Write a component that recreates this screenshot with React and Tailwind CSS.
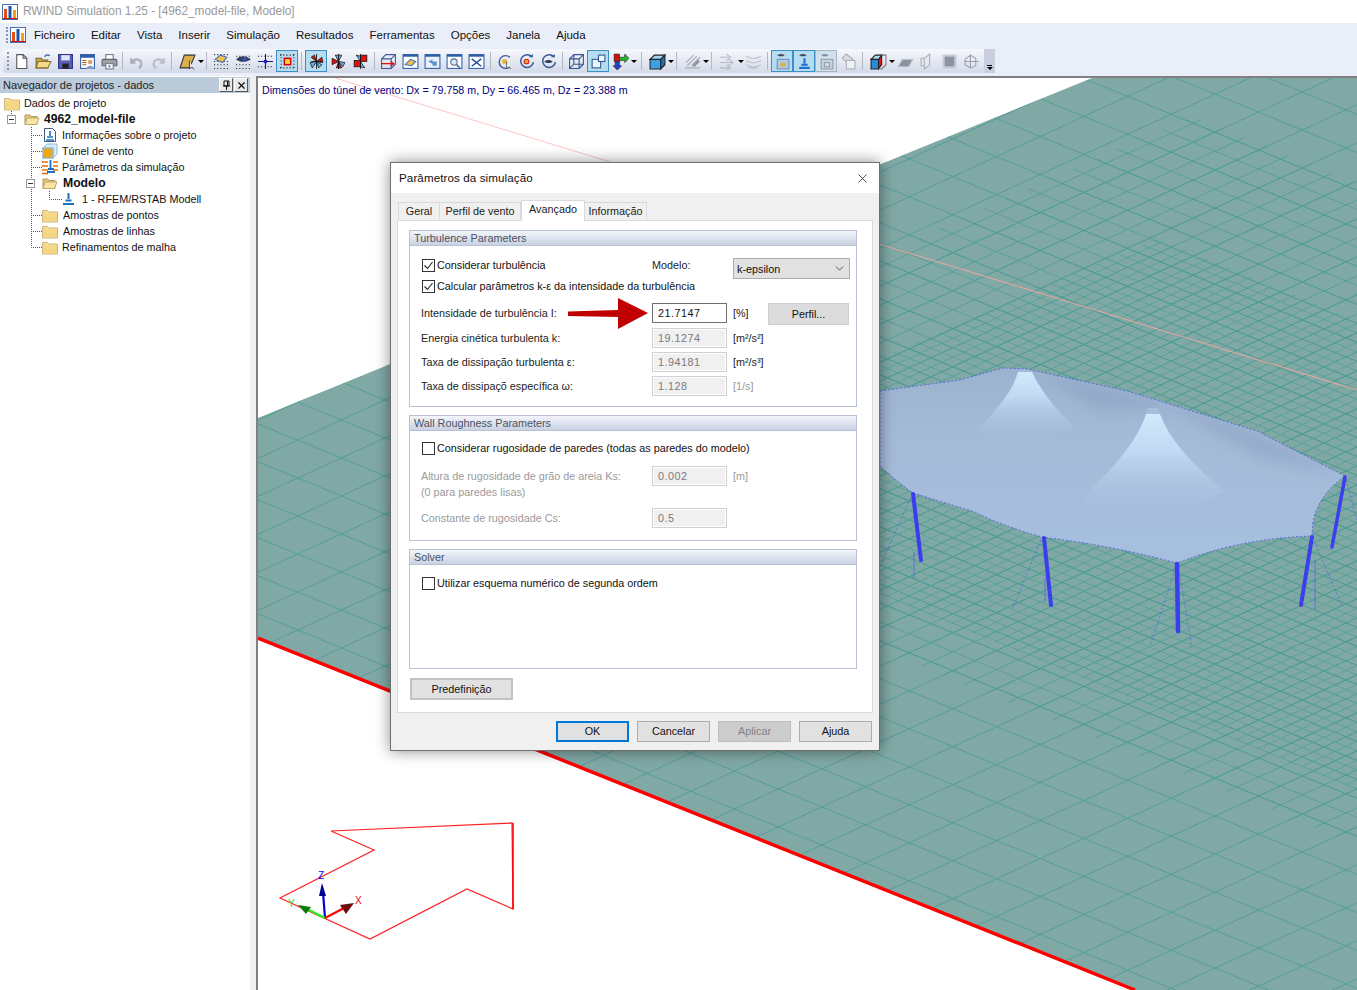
import React from 'react';
import { X, ChevronDown } from 'lucide-react';

const ui = '"Liberation Sans", Arial, sans-serif';

function linesA(step) {
  let d = '';
  for (let c = 197; c < 1620; c += step) d += `M258 ${(c - 0.46 * 258).toFixed(1)}L1357 ${(c - 0.46 * 1357).toFixed(1)}`;
  return d;
}
function linesB(step) {
  let d = '';
  for (let c = -480; c < 890; c += step) d += `M258 ${(c + 0.41 * 258).toFixed(1)}L1357 ${(c + 0.41 * 1357).toFixed(1)}`;
  return d;
}

const roofPath =
  'M880 391 L960 380 L1003 368 L1027 369 L1127 391 L1257 431 L1345 476 Q1318 495 1313 522 L1312 536 Q1240 538 1177 563 Q1110 545 1042 537 Q1000 525 975 512 L913 493 Q895 480 880 466 Z';

function Scene() {
  return (
    <svg width="1099" height="912" viewBox="258 78 1099 912" className="absolute left-0 top-0">
      <defs>
        <clipPath id="ground"><polygon points="258,418 1092,78 1357,78 1357,990 1135,990 258,638" /></clipPath>
        <clipPath id="mid"><polygon points="1192,116 1700,324 1357,845 420,460" /></clipPath>
        <clipPath id="fine"><polygon points="1157,238 1500,380 1357,790 600,480" /></clipPath>
        <clipPath id="roofClip"><path d={roofPath} /></clipPath>
        <linearGradient id="roof" x1="0" y1="0" x2="0" y2="1">
          <stop offset="0" stopColor="#9cb3d0" />
          <stop offset="0.35" stopColor="#a4bbd8" />
          <stop offset="1" stopColor="#a7c0df" />
        </linearGradient>
        <linearGradient id="cone" x1="0" y1="0" x2="0" y2="1">
          <stop offset="0" stopColor="#d2e8fc" />
          <stop offset="0.35" stopColor="#c2daf3" />
          <stop offset="1" stopColor="#a7c0df" stopOpacity="0" />
        </linearGradient>
        <filter id="soft"><feGaussianBlur stdDeviation="7" /></filter>
      </defs>
      <line x1="335" y1="78" x2="640" y2="171" stroke="#ffc4c4" strokeWidth="1" />
      <polygon points="258,418 1092,78 1357,78 1357,990 1135,990 258,638" fill="#80a9a6" />
      <g clipPath="url(#ground)" fill="none" stroke="#4f9d93" strokeWidth="0.9">
        <path d={linesA(38)} />
        <path d={linesB(38)} />
        <g clipPath="url(#mid)" strokeWidth="0.8">
          <path d={linesA(19)} />
          <path d={linesB(19)} />
        </g>
        <g clipPath="url(#fine)" strokeWidth="0.7">
          <path d={linesA(9.5)} />
          <path d={linesB(9.5)} />
        </g>
      </g>
      <line x1="640" y1="171" x2="1357" y2="390" stroke="#eda6a0" strokeWidth="1" />
      <line x1="258" y1="638" x2="1135" y2="990" stroke="#ff0000" strokeWidth="3.5" />

      {/* roof */}
      <path d={roofPath} fill="url(#roof)" />
      <g clipPath="url(#roofClip)">
        <path d="M1040 374 L1127 391 L1257 431 L1345 476 L1260 458 L1170 408 L1100 412 Z" fill="#8aa2c1" opacity="0.6" filter="url(#soft)" />
        <path d="M1018 372 Q1012 396 975 432 Q1025 450 1075 428 Q1044 398 1032 372 Z" fill="url(#cone)" />
        <polygon points="1018,372 1022,368 1030,368 1032,372" fill="#a4bcd8" />
        <path d="M1146 414 Q1136 448 1080 500 Q1155 535 1225 492 Q1172 448 1160 414 Z" fill="url(#cone)" />
        <polygon points="1146,414 1148,408 1158,408 1160,414" fill="#a8bfdb" />
      </g>
      <path d={roofPath} fill="none" stroke="#4a4af0" strokeWidth="0.7" strokeDasharray="2 2" />

      {/* poles */}
      <g stroke="#3d3df0" strokeLinecap="round">
        <line x1="913" y1="494" x2="921" y2="560" strokeWidth="4" />
        <line x1="1044" y1="538" x2="1051" y2="605" strokeWidth="4" />
        <line x1="1177" y1="564" x2="1178" y2="631" strokeWidth="4.5" />
        <line x1="1312" y1="537" x2="1301" y2="605" strokeWidth="4" />
        <line x1="1345" y1="477" x2="1332" y2="547" strokeWidth="3.5" />
      </g>
      <g stroke="#5a5ae8" strokeWidth="0.7" strokeDasharray="2 2" fill="none">
        <path d="M912 495L882 562M1041 540L1012 610M1175 570L1150 646M1180 575L1192 648M1316 545L1342 606M1346 480L1357 520" />
        <path d="M914 552V578M1045 578V602M1315 560V610" strokeDasharray="none" />
      </g>

      {/* wind tunnel outline and axes */}
      <polygon points="331,831 512,823 513,909 467,889 370,939 280,898 374,850" fill="none" stroke="#ff2020" strokeWidth="1.2" />
      <line x1="513" y1="823" x2="513" y2="909" stroke="#ff0000" strokeWidth="1.5" />
      <line x1="325" y1="918" x2="323" y2="892" stroke="#0000dd" strokeWidth="2.2" />
      <polygon points="322,883 326,896 319,896" fill="#000090" />
      <line x1="325" y1="918" x2="305" y2="908" stroke="#22ee22" strokeWidth="2.2" />
      <polygon points="298,905 311,907 306,914" fill="#0b7a0b" />
      <line x1="325" y1="918" x2="344" y2="908" stroke="#ff0000" strokeWidth="2.2" />
      <polygon points="354,903 346,914 340,905" fill="#6d0f0f" />
      <text x="318" y="879" fontSize="10" fill="#0000ff" fontFamily={ui}>Z</text>
      <text x="288" y="907" fontSize="10" fill="#22dd22" fontFamily={ui}>Y</text>
      <text x="355" y="904" fontSize="10" fill="#ee0000" fontFamily={ui}>X</text>
    </svg>
  );
}

/* toolbar drawings, all on a 16 box */
const icons = {
  doc: <path d="M3.5 1.5h6l3.5 3.5v9.5h-9.5z M9.5 1.5v3.5h3.5" fill="#fff" stroke="#555" />,
  open: (
    <>
      <path d="M1 5h5l1 1.5h5v7.5h-11z" fill="#c9a94d" stroke="#7a6425" />
      <path d="M3 8h12l-3 6h-11z" fill="#f3d98a" stroke="#8a7030" />
      <path d="M9 3.5c1.5-2 3-2 5-1" fill="none" stroke="#3b6fb3" strokeWidth="1.3" />
    </>
  ),
  save: (
    <>
      <rect x="1.5" y="1.5" width="13" height="13" fill="#5a5fb8" stroke="#2b2f80" />
      <rect x="4" y="2" width="8" height="5" fill="#dfe6f5" />
      <rect x="5" y="10" width="6" height="4.5" fill="#222" />
    </>
  ),
  props: (
    <>
      <rect x="1.5" y="1.5" width="13" height="13" fill="#fff" stroke="#2d5fa8" />
      <rect x="1.5" y="1.5" width="13" height="3" fill="#2d5fa8" />
      <path d="M3 7h4M3 9h4M3 11h4" stroke="#b06020" />
      <circle cx="10.5" cy="8.5" r="2.2" fill="#e0a070" />
      <path d="M7 15c0-4 7-4 7 0z" fill="#7f9fc8" />
    </>
  ),
  print: (
    <>
      <rect x="4.5" y="1.5" width="7" height="5" fill="#fff" stroke="#777" />
      <rect x="1" y="6" width="14" height="6" rx="1" fill="#9a9fa8" stroke="#60646c" />
      <rect x="4.5" y="10" width="7" height="5" fill="#fff" stroke="#777" />
      <rect x="7" y="11.5" width="2" height="2" fill="#4a8ad0" />
    </>
  ),
  undo: <path d="M3 5l0 4 4 0M3.5 8.5c3-4 9-3 9 2 0 1.5-1 3-2.5 3.5" fill="none" stroke="#a9aeb8" strokeWidth="2" />,
  redo: <path d="M13 5l0 4-4 0M12.5 8.5c-3-4-9-3-9 2 0 1.5 1 3 2.5 3.5" fill="none" stroke="#b9bec8" strokeWidth="2" />,
  wedge: (
    <>
      <path d="M5 2h10l-5 12h-9z" fill="#d9b04d" stroke="#333" />
      <path d="M10 7l0 8 2-2 2 2.5" fill="#fff" stroke="#222" strokeWidth="0.8" />
    </>
  ),
  dotsA: (
    <>
      <path d="M1 1.5h14M1 8h14M1 11h14M1 14.5h14" stroke="#222" strokeDasharray="1 2" />
      <path d="M2 6l5-4 6 2-4 5z" fill="#f0c040" stroke="#4070c0" />
    </>
  ),
  dotsB: (
    <>
      <path d="M1 3h14M1 11h14M1 14.5h14" stroke="#222" strokeDasharray="1 2" />
      <path d="M1 6c4-4 9-4 14 0-5 3-10 3-14 0z" fill="#33405c" />
      <circle cx="9" cy="6" r="2" fill="#3050c0" />
    </>
  ),
  cross: (
    <>
      <path d="M1 8h14M8 1v14" stroke="#1a1a70" />
      <path d="M1 3h14M1 13h14" stroke="#222" strokeDasharray="1 2" />
      <rect x="6.5" y="6.5" width="3" height="3" fill="#2020d0" />
    </>
  ),
  target: (
    <>
      <path d="M1 2h14M1 14h14M2 1v14M14 1v14" stroke="#222" strokeDasharray="1 2" />
      <rect x="5" y="5" width="6" height="6" fill="#ffd040" stroke="#e00000" strokeWidth="1.4" />
    </>
  ),
  fan: (
    <>
      <path d="M8 8l-5-4 3-2zM8 8l5-4 1 5z" fill="#e01010" stroke="#111" strokeWidth="0.7" />
      <path d="M8 8l-6 1 2 5zM8 8l2 6 3-3z" fill="#6ab0e8" stroke="#111" strokeWidth="0.7" />
      <path d="M8 1v14M3 8h10" stroke="#111" strokeWidth="0.8" />
    </>
  ),
  fan2: (
    <>
      <path d="M8 8l-3-6 6 0z M8 8l6 1-2 4z" fill="#6ab0e8" stroke="#111" strokeWidth="0.7" />
      <path d="M8 8l-6-3 0 6zM8 8l-2 6 5 0z" fill="#e01010" stroke="#111" strokeWidth="0.7" />
      <path d="M8 1v14" stroke="#111" strokeWidth="0.8" />
    </>
  ),
  fan3: (
    <>
      <rect x="8" y="2" width="6" height="6" fill="#e01010" stroke="#111" strokeWidth="0.7" />
      <rect x="2" y="7" width="6" height="6" fill="#e01010" stroke="#111" strokeWidth="0.7" />
      <path d="M8 8l-4-6 4 1zM8 8l4 6-4-1z" fill="#6ab0e8" stroke="#111" strokeWidth="0.7" />
      <path d="M8 1v14" stroke="#111" strokeWidth="0.8" />
    </>
  ),
  box: (
    <>
      <path d="M1.5 5.5h9v9h-9zM1.5 5.5l4-4h9v9l-4 4M10.5 5.5l4-4" fill="none" stroke="#3a5a9a" />
      <path d="M1 10h11M10 8l3 2-3 2" fill="none" stroke="#e01010" strokeWidth="1.2" />
    </>
  ),
  win1: (
    <>
      <rect x="1" y="1.5" width="14" height="13" fill="#fff" stroke="#2d5fa8" />
      <rect x="1" y="1.5" width="14" height="2" fill="#2d5fa8" />
      <path d="M3 11l5-5 5 2-4 4z" fill="#f0c040" stroke="#4070c0" />
    </>
  ),
  win2: (
    <>
      <rect x="1" y="1.5" width="14" height="13" fill="#e8f0fa" stroke="#2d5fa8" />
      <rect x="1" y="1.5" width="14" height="2" fill="#2d5fa8" />
      <path d="M4 8l4-2v2h4v4h-4v-2z" fill="#5a8fd0" />
    </>
  ),
  win3: (
    <>
      <rect x="1" y="1.5" width="14" height="13" fill="#fff" stroke="#2d5fa8" />
      <rect x="1" y="1.5" width="14" height="2" fill="#2d5fa8" />
      <circle cx="7.5" cy="8.5" r="3" fill="#d8e8f8" stroke="#5a7090" />
      <path d="M10 11l3 3" stroke="#5a7090" strokeWidth="1.5" />
    </>
  ),
  win4: (
    <>
      <rect x="1" y="1.5" width="14" height="13" fill="#fff" stroke="#2d5fa8" />
      <rect x="1" y="1.5" width="14" height="2" fill="#2d5fa8" />
      <path d="M3.5 5.5l9 7M12.5 5.5l-9 7" stroke="#2050a0" strokeWidth="1.4" />
    </>
  ),
  rot1: (
    <>
      <path d="M13 4a6 6 0 1 0 0 9" fill="none" stroke="#3a5a9a" strokeWidth="1.3" />
      <rect x="6" y="6" width="4" height="4" fill="#f0b020" />
      <path d="M10 8l0 7 2-2 2 2" fill="#fff" stroke="#333" strokeWidth="0.7" />
    </>
  ),
  rot2: (
    <>
      <path d="M13 3.5a6 6 0 1 0 1.5 5" fill="none" stroke="#3a5a9a" strokeWidth="1.4" />
      <path d="M10 4h4V1z" fill="#3a5a9a" />
      <circle cx="8" cy="8" r="2.2" fill="#f0b020" stroke="#d02020" />
    </>
  ),
  rot3: (
    <>
      <path d="M13 3.5a6 6 0 1 0 1.5 5" fill="none" stroke="#3a5a9a" strokeWidth="1.4" />
      <path d="M10 4h4V1z" fill="#3a5a9a" />
      <path d="M4 8c2-2 6-2 8 0-2 2-6 2-8 0z" fill="#33405c" />
    </>
  ),
  cube: <path d="M1.5 5.5h9v9h-9zM1.5 5.5l4-4h9v9l-4 4M10.5 5.5l4-4M1.5 14.5l4-4h9M5.5 1.5v9" fill="none" stroke="#34558f" />,
  twoBox: (
    <>
      <rect x="2" y="6" width="8" height="8" fill="#eaf5fc" stroke="#34558f" />
      <rect x="8" y="2" width="6" height="6" fill="#eaf5fc" stroke="#34558f" />
    </>
  ),
  axes: (
    <>
      <path d="M7 8V1h-5v7z" fill="#d01010" stroke="#222" strokeWidth="0.6" />
      <path d="M7 4h5V1l4 4-4 4V7H7z" fill="#20c020" stroke="#222" strokeWidth="0.6" />
      <path d="M3 8v4H1l4 4 4-4H7V8z" fill="#2040d0" stroke="#222" strokeWidth="0.6" />
    </>
  ),
  solid: (
    <>
      <path d="M1 6h10v9h-10z" fill="#3aa0e8" stroke="#222" />
      <path d="M1 6l4-4h10l-4 4z" fill="#9ed4f5" stroke="#222" />
      <path d="M11 6l4-4v9l-4 4z" fill="#1c70b8" stroke="#222" />
    </>
  ),
  hatch: (
    <>
      <path d="M1 14h14M2 9l7-7M3 12l9-9M7 12l8-8" stroke="#a9aeb8" fill="none" />
      <path d="M8 12l5-6 2 2-5 5z" fill="#8c929c" />
    </>
  ),
  flow: <path d="M1 4h8M1 9h11M1 14h8M7 1l4 3-4 3M9 6l4 3-4 3M7 11l4 3-4 2" fill="none" stroke="#b4b9c2" />,
  waves: <path d="M1 3c5 3 9 3 14 0M1 7c5 3 9 3 14 0M1 11c5 3 9 3 14 0M4 14h8" fill="none" stroke="#bcc1ca" />,
  camA: (
    <>
      <path d="M3 2c2-1.5 5-1.5 7 0-2 1.5-5 1.5-7 0z" fill="#444c60" />
      <rect x="3" y="6" width="11" height="9" fill="#9fd0ef" stroke="#88a" />
      <rect x="6" y="9" width="5" height="4" fill="#e8b040" />
    </>
  ),
  camB: (
    <>
      <path d="M3 2c2-1.5 5-1.5 7 0-2 1.5-5 1.5-7 0z" fill="#444c60" />
      <path d="M3 14h10M5 11h6" stroke="#2070d0" strokeWidth="2" />
      <path d="M8 5v5" stroke="#2070d0" strokeWidth="2" />
    </>
  ),
  camC: (
    <>
      <path d="M3 2c2-1.5 5-1.5 7 0-2 1.5-5 1.5-7 0z" fill="#8a909c" />
      <rect x="3" y="6" width="11" height="9" fill="#c6d6e0" stroke="#99a" />
      <rect x="6" y="9" width="5" height="4" fill="#d2dce4" stroke="#99a" />
    </>
  ),
  camD: (
    <>
      <path d="M2 5l4-4 6 5-4 4z" fill="#d8dce4" stroke="#a9aeb8" />
      <rect x="6" y="7" width="8" height="8" fill="#f0f2f6" stroke="#a9aeb8" />
    </>
  ),
  colorBox: (
    <>
      <path d="M1 6h7v9h-7z" fill="#2b8ad8" stroke="#222" />
      <path d="M8 6l3-4v9l-3 4z" fill="#e01818" stroke="#222" />
      <path d="M1 6l4-4h6l-3 4z" fill="#a9d8f0" stroke="#222" />
      <path d="M11 2h4v9l-4 4H8" fill="none" stroke="#777" />
    </>
  ),
  plane1: <path d="M1 13l4-7h10l-4 7z" fill="#8a919f" stroke="#c0c4cc" />,
  plane2: <path d="M5 5l5-4v10l-5 4zM5 5h-3v7h3" fill="#e8eaf0" stroke="#a9aeb8" />,
  plane3: <rect x="2.5" y="2.5" width="11" height="11" fill="#8c93a2" stroke="#c6cad2" strokeWidth="2" />,
  plane4: <path d="M2 6l5-4v12l-5-3zM7 2l5 3v7l-5 2M1 8h14" fill="none" stroke="#9ba0aa" />,
};

function Tool({ name, active, faded, caret }) {
  return (
    <div
      className={`relative flex h-[22px] w-[22px] shrink-0 items-center justify-center border ${
        active ? 'border-[#3b8fc4] bg-[#b5dcf1]' : faded ? 'border-[#a9b3bd] bg-[#cfe1ec]' : 'border-transparent'
      }`}
    >
      <svg width="17" height="17" viewBox="0 0 16 16">{icons[name]}</svg>
      {caret && <span className="absolute left-[21px] top-[9px] h-0 w-0 border-x-[3px] border-t-[3px] border-x-transparent border-t-black" />}
    </div>
  );
}

function Sep({ className }) {
  return <span className={`h-[18px] w-px shrink-0 bg-[#b3b8c4] ${className}`} />;
}

function Folder({ open }) {
  return open ? (
    <>
      <path d="M1 4h5l1 1.5h6v8h-12z" fill="#e8c878" stroke="#b09a60" />
      <path d="M3 7h12l-2.5 6.5h-11.5z" fill="#f9e4a8" stroke="#c0a868" />
    </>
  ) : (
    <>
      <path d="M.5 3.5h5l1.5 1.5h8.5v10h-15z" fill="#f6dc92" stroke="#cdb67a" />
      <path d="M1 7h14v7.5h-14z" fill="#f4d684" />
    </>
  );
}

const treeIcons = {
  info: (
    <>
      <path d="M2.5 1.5h8l3 3v10h-11z" fill="#fff" stroke="#3a5a80" />
      <path d="M8 4v5M5 10h6M4 13h8" stroke="#1c70c0" strokeWidth="1.6" />
    </>
  ),
  tunnel: (
    <>
      <path d="M1 5l4-4h10v10l-4 4" fill="#d8ecf8" stroke="#8fb8d8" />
      <rect x="1" y="5" width="10" height="10" fill="#f0a810" stroke="#8fb8d8" strokeWidth="1.5" />
    </>
  ),
  params: (
    <>
      <path d="M0 3h6M0 7h6M0 11h6M0 14.5h6M11 3h5M11 7h5M11 11h5" stroke="#e8700a" strokeWidth="1.5" />
      <path d="M8.5 1v8M6 10h6M5 13h8" stroke="#1c70c0" strokeWidth="1.8" />
    </>
  ),
  model: <path d="M6.5 2v6M3.5 9.5h6M1 13h11" stroke="#1c70c0" strokeWidth="2" />,
};

function TreeRow({ w, x, icon, open, lines, bold, children }) {
  return (
    <div className="flex h-4 items-center">
      <svg width={w} height="16" className="shrink-0">
        <path d={lines} fill="none" stroke="#555" strokeDasharray="1 1" />
        <g transform={`translate(${x} 0)`}>{icon ? treeIcons[icon] : <Folder open={open} />}</g>
      </svg>
      <span className={`whitespace-nowrap text-[#111] ${bold ? 'text-[12.2px] font-bold' : 'text-[10.8px]'}`}>{children}</span>
    </div>
  );
}

function Expander({ x }) {
  return (
    <span
      style={{ left: x }}
      className="absolute top-[3.5px] flex h-[9px] w-[9px] items-center justify-center border border-[#999] bg-white"
    >
      <span className="h-px w-[5px] bg-[#333]" />
    </span>
  );
}

function Sidebar() {
  return (
    <aside className="flex w-[250px] shrink-0 flex-col bg-white">
      <div className="mt-px flex h-4 items-center justify-between bg-[#bccbd9] pl-[3px] pr-[2px]">
        <span className="text-[11px] text-[#222]">Navegador de projetos - dados</span>
        <div className="flex gap-px">
          <span className="flex h-[14px] w-[14px] items-center justify-center border border-b-[#555] border-l-white border-r-[#555] border-t-white bg-[#e8e8e8]">
            <svg width="9" height="10" viewBox="0 0 9 10">
              <path d="M2 1h5v5H2zM1 6h7M4.5 6v4M5.5 1v5" fill="none" stroke="#111" />
            </svg>
          </span>
          <span className="flex h-[14px] w-[14px] items-center justify-center border border-b-[#555] border-l-white border-r-[#555] border-t-white bg-[#e8e8e8]">
            <X size={11} strokeWidth={2.5} color="#111" />
          </span>
        </div>
      </div>
      <div className="pl-1 pt-[2px]">
        <TreeRow w={20} x={0}>Dados de projeto</TreeRow>
        <div className="relative">
          <TreeRow w={40} x={20} open bold lines="M7.5 0V3">4962_model-file</TreeRow>
          <Expander x={3} />
        </div>
        <TreeRow w={58} x={38} icon="info" lines="M27.5 0V16M27 8.5H38">Informações sobre o projeto</TreeRow>
        <TreeRow w={58} x={38} icon="tunnel" lines="M27.5 0V16M27 8.5H38">Túnel de vento</TreeRow>
        <TreeRow w={58} x={38} icon="params" lines="M27.5 0V16M27 8.5H38">Parâmetros da simulação</TreeRow>
        <div className="relative">
          <TreeRow w={59} x={38} open bold lines="M27.5 0V16">Modelo</TreeRow>
          <Expander x={22} />
        </div>
        <TreeRow w={78} x={58} icon="model" lines="M27.5 0V16M45.5 0V8.5H58">1 - RFEM/RSTAB Modell</TreeRow>
        <TreeRow w={59} x={38} lines="M27.5 0V16M27 8.5H38">Amostras de pontos</TreeRow>
        <TreeRow w={59} x={38} lines="M27.5 0V16M27 8.5H38">Amostras de linhas</TreeRow>
        <TreeRow w={58} x={38} lines="M27.5 0V8.5H38">Refinamentos de malha</TreeRow>
      </div>
    </aside>
  );
}

function Check({ on, children }) {
  return (
    <div className="flex items-center whitespace-nowrap text-[10.8px] leading-[14px] text-[#111]">
      <span className="mr-[2px] flex h-[13px] w-[13px] shrink-0 items-center justify-center border border-[#333] bg-white">
        {on && (
          <svg width="11" height="11" viewBox="0 0 11 11">
            <path d="M1.5 5.5l3 3 5-6.5" fill="none" stroke="#222" strokeWidth="1.1" />
          </svg>
        )}
      </span>
      {children}
    </div>
  );
}

function Field({ value, live }) {
  return live ? (
    <span className="flex h-5 w-[75px] shrink-0 items-center border border-[#6e6e6e] bg-white pl-[5px] text-[10.8px] tracking-[0.5px] text-[#111]">
      {value}
    </span>
  ) : (
    <span className="flex h-5 w-[75px] shrink-0 items-center border border-[#cfcfcf] bg-[#f0f0f0] pl-[5px] text-[10.8px] tracking-[0.5px] text-[#7a7a7a] shadow-[inset_0_0_0_1px_#fff]">
      {value}
    </span>
  );
}

function ParamRow({ label, value, unit, live, muted, unitMuted, className, children }) {
  return (
    <div className={`flex h-5 items-center text-[10.8px] ${className}`}>
      <span className={`ml-[-1px] w-[231px] shrink-0 whitespace-nowrap ${muted ? 'text-[#9a9a9a]' : 'text-[#222]'}`}>{label}</span>
      <Field value={value} live={live} />
      <span className={`ml-[6px] w-[29px] shrink-0 whitespace-nowrap ${muted || unitMuted ? 'text-[#9a9a9a]' : 'text-[#222]'}`}>{unit}</span>
      {children}
    </div>
  );
}

function Group({ title, className, children }) {
  return (
    <section className={`border border-[#b9c1d4] bg-white ${className}`}>
      <div className="flex h-[15px] items-center border-b border-[#b9c1d4] bg-gradient-to-b from-[#f3f5fa] to-[#c9d2e3] pl-1 text-[10.8px] text-[#4a5260]">
        {title}
      </div>
      <div className="pl-3">{children}</div>
    </section>
  );
}

function DlgButton({ children, className }) {
  return (
    <button className={`flex h-[21px] w-[73px] items-center justify-center border border-[#adadad] bg-[#e1e1e1] text-[10.8px] text-[#111] ${className}`}>
      {children}
    </button>
  );
}

function Dialog() {
  return (
    <div className="absolute left-[132px] top-[84px] flex h-[589px] w-[490px] flex-col border border-[#6f6f6f] bg-[#f0f0f0] shadow-[0_0_14px_rgba(0,0,0,0.45)]">
      <div className="flex h-[30px] shrink-0 items-center justify-between bg-white pl-2 pr-[9px]">
        <span className="text-[11.6px] tracking-[0.1px] text-[#111]">Parâmetros da simulação</span>
        <X size={15} strokeWidth={1.2} color="#111" />
      </div>
      <div className="ml-[6px] mt-[7px] flex h-[20px] items-end pl-[1px] text-[10.8px] leading-[14px] text-[#222]">
        <span className="mb-px flex h-[17px] w-[42px] items-center justify-center border border-b-0 border-[#d9d9d9] bg-[#f0f0f0]">Geral</span>
        <span className="mb-px flex h-[17px] w-[81px] items-center justify-center border border-b-0 border-l-0 border-[#d9d9d9] bg-[#f0f0f0]">Perfil de vento</span>
        <span className="relative z-10 mb-[-1px] flex h-[21px] w-[64px] items-start justify-center border border-b-0 border-[#d9d9d9] bg-white pt-[1px]">Avançado</span>
        <span className="mb-px flex h-[17px] w-[62px] items-center justify-center border border-b-0 border-l-0 border-[#d9d9d9] bg-[#f0f0f0]">Informação</span>
      </div>
      <div className="mx-[6px] flex h-[493px] flex-col border border-[#d9d9d9] bg-white pl-[11px] pr-[13px] pt-[9px]">
        <Group title="Turbulence Parameters" className="h-[177px] w-[448px] shrink-0">
          <div className="mt-[12px] flex h-[21px] items-start text-[10.8px] leading-[14px]">
            <div className="w-[230px] shrink-0">
              <Check on>Considerar turbulência</Check>
            </div>
            <span className="w-[81px] shrink-0 text-[#222]">Modelo:</span>
            <span className="flex h-[21px] w-[117px] items-center justify-between border border-[#adadad] bg-[#e1e1e1] pl-[3px] pr-[3px] text-[#111]">
              k-epsilon <ChevronDown size={13} strokeWidth={1.2} />
            </span>
          </div>
          <Check on>Calcular parâmetros k-ε da intensidade da turbulência</Check>
          <ParamRow className="mt-[10px]" label="Intensidade de turbulência I:" value="21.7147" unit="[%]" live>
            <span className="ml-[6px] mt-[2px] flex h-[22px] w-[81px] shrink-0 items-center justify-center border border-[#d0d0d0] bg-[#dcdcdc] text-[#111]">Perfil...</span>
          </ParamRow>
          <ParamRow className="mt-[5px]" label="Energia cinética turbulenta k:" value="19.1274" unit="[m²/s²]" />
          <ParamRow className="mt-[4px]" label="Taxa de dissipação turbulenta ε:" value="1.94181" unit="[m²/s³]" />
          <ParamRow className="mt-[4px]" label="Taxa de dissipaçõ específica ω:" value="1.128" unit="[1/s]" unitMuted />
        </Group>
        <Group title="Wall Roughness Parameters" className="mt-2 h-[126px] w-[448px] shrink-0">
          <div className="mt-[10px]">
            <Check>Considerar rugosidade de paredes (todas as paredes do modelo)</Check>
          </div>
          <ParamRow muted className="mt-[11px]" label="Altura de rugosidade de grão de areia Ks:" value="0.002" unit="[m]" />
          <p className="ml-[-1px] mt-[-2px] h-4 text-[10.8px] leading-4 text-[#9a9a9a]">(0 para paredes lisas)</p>
          <ParamRow muted className="mt-[8px]" label="Constante de rugosidade Cs:" value="0.5" unit="" />
        </Group>
        <Group title="Solver" className="mt-2 h-[120px] w-[448px] shrink-0">
          <div className="mt-[11px]">
            <Check>Utilizar esquema numérico de segunda ordem</Check>
          </div>
        </Group>
        <button className="ml-px mt-[9px] flex h-[22px] w-[103px] items-center justify-center border-2 border-[#c2c2c2] bg-[#e1e1e1] text-[10.8px] text-[#111]">
          Predefinição
        </button>
      </div>
      <div className="mt-2 flex justify-end gap-2 pr-[7px]">
        <DlgButton className="!border-2 !border-[#0078d7]">OK</DlgButton>
        <DlgButton>Cancelar</DlgButton>
        <DlgButton className="!border-[#bfbfbf] !bg-[#cccccc] !text-[#838383]">Aplicar</DlgButton>
        <DlgButton>Ajuda</DlgButton>
      </div>
      <svg width="82" height="32" viewBox="0 0 82 32" className="absolute left-[177px] top-[135px]">
        <path d="M0 13.5L50 12V0L80 15L50 31V19L0 18z" fill="#c00000" />
      </svg>
    </div>
  );
}

function AppLogo() {
  return (
    <svg width="16" height="16" viewBox="0 0 16 16">
      <rect x="0.5" y="0.5" width="15" height="15" fill="#fff" stroke="#4a6fb0" />
      <rect x="2" y="5" width="3" height="9" fill="#e05010" />
      <rect x="6.5" y="2" width="3" height="12" fill="#1c50b0" />
      <rect x="11" y="6" width="3" height="8" fill="#f0a010" />
      <path d="M1 14.5h14" stroke="#d01010" />
    </svg>
  );
}

const menus = ['Ficheiro', 'Editar', 'Vista', 'Inserir', 'Simulação', 'Resultados', 'Ferramentas', 'Opções', 'Janela', 'Ajuda'];

export default function App() {
  return (
    <div className="flex h-[990px] w-[1357px] flex-col overflow-hidden bg-[#f0f0f0]" style={{ fontFamily: ui }}>
      <header className="flex h-[23px] shrink-0 items-center bg-white pl-[2px]">
        <AppLogo />
        <span className="ml-[5px] pt-px text-[11.85px] text-[#999]">RWIND Simulation 1.25 - [4962_model-file, Modelo]</span>
      </header>

      <nav className="flex h-6 shrink-0 items-center bg-[#eaeef8] pl-[6px]">
        <span className="mr-[2px] h-4 w-[2px] border-l-2 border-dotted border-[#8a93a8]" />
        <AppLogo />
        <div className="ml-2 flex gap-4 pt-px text-[11.5px] text-[#111]">
          {menus.map((m) => (
            <span key={m}>{m}</span>
          ))}
        </div>
      </nav>

      <div className="flex h-[29px] shrink-0 items-start bg-[#eaeef8] pl-[3px]">
        <div className="mt-[2px] flex h-6 w-[992px] items-center rounded-[3px] bg-gradient-to-b from-[#f6f8fc] to-[#d3d9e8] pl-[4px]">
          <span className="h-[18px] w-[3px] border-l-2 border-dotted border-[#8a93a8]" />
          <Tool name="doc" />
          <Tool name="open" />
          <Tool name="save" />
          <Tool name="props" />
          <Tool name="print" />
          <Sep className="mx-[2px]" />
          <Tool name="undo" />
          <Tool name="redo" />
          <Sep className="ml-[2px] mr-[4px]" />
          <Tool name="wedge" caret />
          <Sep className="ml-[8px] mr-[3px]" />
          <Tool name="dotsA" />
          <Tool name="dotsB" />
          <Tool name="cross" />
          <Tool name="target" active />
          <Sep className="mx-[3px]" />
          <Tool name="fan" active />
          <Tool name="fan2" />
          <Tool name="fan3" />
          <Sep className="ml-[3px] mr-[2px]" />
          <Tool name="box" />
          <Tool name="win1" />
          <Tool name="win2" />
          <Tool name="win3" />
          <Tool name="win4" />
          <Sep className="ml-[3px] mr-[2px]" />
          <Tool name="rot1" />
          <Tool name="rot2" />
          <Tool name="rot3" />
          <Sep className="ml-[3px] mr-[2px]" />
          <Tool name="cube" />
          <Tool name="twoBox" active />
          <Tool name="axes" caret />
          <Sep className="ml-[10px] mr-[4px]" />
          <Tool name="solid" caret />
          <Sep className="ml-[8px] mr-[4px]" />
          <Tool name="hatch" caret />
          <Sep className="ml-[8px] mr-[4px]" />
          <Tool name="flow" caret />
          <span className="w-1 shrink-0" />
          <Tool name="waves" />
          <Sep className="ml-[3px] mr-[3px]" />
          <Tool name="camA" active />
          <Tool name="camB" active />
          <Tool name="camC" faded />
          <Tool name="camD" />
          <Sep className="ml-[3px] mr-[4px]" />
          <Tool name="colorBox" caret />
          <span className="w-[5px] shrink-0" />
          <Tool name="plane1" />
          <Tool name="plane2" />
          <Tool name="plane3" />
          <Tool name="plane4" />
          <div className="ml-auto flex h-full w-[11px] flex-col items-center justify-end bg-[#c9cfde] pb-[3px]">
            <span className="mb-px h-px w-[5px] bg-black" />
            <span className="h-0 w-0 border-x-[3px] border-t-[3px] border-x-transparent border-t-black" />
          </div>
        </div>
      </div>

      <div className="flex min-h-0 flex-1">
        <Sidebar />
        <div className="w-[6px] shrink-0 bg-[#f0f0f0]" />
        <main className="relative flex-1 overflow-hidden border-l-2 border-t-2 border-[#808080] bg-white">
          <Scene />
          <p className="relative pl-1 pt-[5px] text-[10.7px] leading-[14px] text-[#000080]">
            Dimensões do túnel de vento: Dx = 79.758 m, Dy = 66.465 m, Dz = 23.388 m
          </p>
          <Dialog />
        </main>
      </div>
    </div>
  );
}
